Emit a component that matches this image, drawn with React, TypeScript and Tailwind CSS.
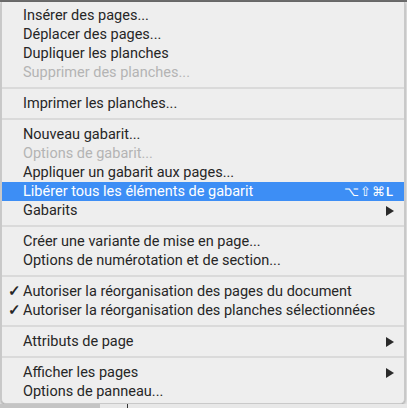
import React from "react";

type Item =
    | { kind: "sep" }
    | { kind: "item"; label: string; disabled?: boolean; checked?: boolean; active?: boolean; shortcut?: string; submenu?: boolean };

const items: Item[] = [
    { kind: "item", label: "Insérer des pages..." },
    { kind: "item", label: "Déplacer des pages..." },
    { kind: "item", label: "Dupliquer les planches" },
    { kind: "item", label: "Supprimer des planches...", disabled: true },
    { kind: "sep" },
    { kind: "item", label: "Imprimer les planches..." },
    { kind: "sep" },
    { kind: "item", label: "Nouveau gabarit..." },
    { kind: "item", label: "Options de gabarit...", disabled: true },
    { kind: "item", label: "Appliquer un gabarit aux pages..." },
    { kind: "item", label: "Libérer tous les éléments de gabarit", active: true, shortcut: "⌥⇧⌘L" },
    { kind: "item", label: "Gabarits", submenu: true },
    { kind: "sep" },
    { kind: "item", label: "Créer une variante de mise en page..." },
    { kind: "item", label: "Options de numérotation et de section..." },
    { kind: "sep" },
    { kind: "item", label: "Autoriser la réorganisation des pages du document", checked: true },
    { kind: "item", label: "Autoriser la réorganisation des planches sélectionnées", checked: true },
    { kind: "sep" },
    { kind: "item", label: "Attributs de page", submenu: true },
    { kind: "sep" },
    { kind: "item", label: "Afficher les pages", submenu: true },
    { kind: "item", label: "Options de panneau..." },
];

function Arrow() {
    return (
        <svg width="8" height="10" viewBox="0 0 8 10" className="fill-[#2a2a2a]">
            <path d="M0 0 L8 5 L0 10 Z" />
        </svg>
    );
}

export default function App() {
    return (
        <div className="w-[407px] h-[408px] bg-[#e4e4e4] overflow-hidden flex flex-col" style={{ fontFamily: "Roboto, 'Noto Sans', sans-serif" }}>
            <div className="h-[2px] bg-[#6d6d6d] shrink-0" />
            <div className="ml-[1px] w-[404px] bg-[#eeeeee] rounded-b-[5px] shadow-[0_1px_3px_rgba(0,0,0,0.35)] border-x border-b border-[#c9c9c9] pt-[4px] pb-[2px] shrink-0">
                {items.map((it, i) =>
                    it.kind === "sep" ? (
                        <div key={i} className="h-[12px] flex items-center">
                            <div className="h-[2px] w-full bg-[#dadada]" />
                        </div>
                    ) : (
                        <div
                            key={i}
                            className={`h-[19px] flex items-center pr-[10px] text-[14.5px] leading-none ${it.active ? "bg-[#3d8ef5] text-white" : it.disabled ? "text-[#b4b4b4]" : "text-[#262626]"}`}
                        >
                            <span className="w-[21px] shrink-0 pl-[6px] text-[15px] font-bold">{it.checked ? "✓" : ""}</span>
                            <span className="flex-1 whitespace-nowrap pt-[1px]">{it.label}</span>
                            {it.shortcut && <span className="text-[13px] font-medium tracking-[1px]">{it.shortcut}</span>}
                            {it.submenu && <Arrow />}
                        </div>
                    )
                )}
            </div>
            <div className="flex flex-1">
                <div className="w-[100px] bg-[#c4c4c4]" />
                <div className="flex-1 bg-[#e8e8e8] pl-[27px]">
                    <div className="w-[1px] h-[4px] bg-[#333]" />
                </div>
            </div>
        </div>
    );
}
